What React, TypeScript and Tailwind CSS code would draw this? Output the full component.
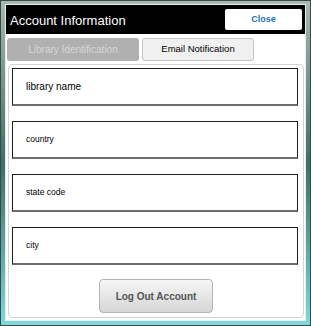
import React from 'react';

const fields = [
  { label: 'library name', size: 'text-[10px]' },
  { label: 'country', size: 'text-[8.5px]' },
  { label: 'state code', size: 'text-[8.5px]' },
  { label: 'city', size: 'text-[8.5px]' },
];

export default function App() {
  return (
    <div
      className="w-[311px] h-[326px] p-px bg-[#3b4a47]"
      style={{ fontFamily: '"Liberation Sans", Arial, sans-serif' }}
    >
      {/* window frame */}
      <div className="h-full px-[4px] pt-[3px] pb-[4px] bg-gradient-to-b from-[#a9b8b2] via-[#3f6f66] to-[#7fd9de]">
        <div className="h-full border border-[#e6eeec] bg-white flex flex-col">
          {/* title bar */}
          <div className="h-[29px] bg-black flex items-center justify-between pl-[4px] pr-[3px]">
            <span className="text-white text-[13px] leading-none pt-[2px]">Account Information</span>
            <button className="w-[77px] h-[21px] bg-white text-[#1a73c2] text-[9px] font-bold rounded-[2px]">
              Close
            </button>
          </div>

          {/* tabs */}
          <div className="flex gap-[3px] pl-[1px] pt-[4px]">
            <div className="w-[132px] h-[23px] rounded-[3px] bg-[#b0b0b0] text-[#d6d6d6] text-[10px] flex items-center justify-center">
              Library Identification
            </div>
            <div className="w-[112px] h-[23px] rounded-[3px] bg-[#f0f0f0] border border-[#c4c4c4] text-black text-[9.5px] flex items-center justify-center">
              Email Notification
            </div>
          </div>

          {/* panel */}
          <div className="ml-[2px] mr-px mt-[3px] flex-1 border border-[#d4d4d4] rounded-[4px] px-[3px] pt-[3px] flex flex-col">
            <div className="flex flex-col gap-[15px]">
              {fields.map((f) => (
                <div
                  key={f.label}
                  className="w-[286px] h-[38px] border border-[#1e1e1e] border-b-[#6e6e6e] border-b-2 flex items-center pl-[13px]"
                >
                  <span className={`${f.size} text-black`}>{f.label}</span>
                </div>
              ))}
            </div>
            <div className="flex justify-center mt-[14px]">
              <button className="w-[114px] h-[34px] rounded-[4px] border border-[#b4b4b4] bg-gradient-to-b from-[#f6f6f6] to-[#d6d6d6] text-[#555555] text-[10px] font-bold">
                Log Out Account
              </button>
            </div>
          </div>
          <div className="h-[2px]" />
        </div>
      </div>
    </div>
  );
}
